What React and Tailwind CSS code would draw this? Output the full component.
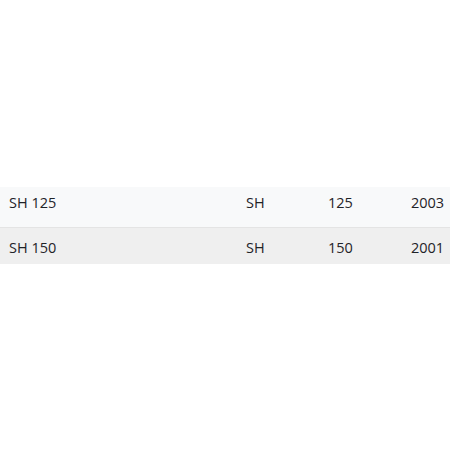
const rows = [
  { name: "SH 125", make: "SH", cc: "125", year: "2003", row: "bg-[#f8f9fa] border-b border-[#e4e4e4] h-[40px]", cell: "pt-[6px] pb-[14px]" },
  { name: "SH 150", make: "SH", cc: "150", year: "2001", row: "bg-[#efefef] h-[36px]", cell: "pt-[10px] pb-[6px]" },
];

export default function App() {
  return (
    <div className="min-h-[450px] bg-white pt-[187px] font-['Open_Sans',sans-serif] text-[14.5px] leading-[20px] text-[#1f2328]">
      <table className="w-full table-fixed border-collapse">
        <colgroup>
          <col className="w-[237px]" />
          <col className="w-[82px]" />
          <col className="w-[83px]" />
          <col />
        </colgroup>
        <tbody>
          {rows.map((r) => (
            <tr key={r.name} className={r.row}>
              <td className={`px-[9px] align-top ${r.cell}`}>{r.name}</td>
              <td className={`px-[9px] align-top ${r.cell}`}>{r.make}</td>
              <td className={`px-[9px] align-top ${r.cell}`}>{r.cc}</td>
              <td className={`px-[9px] align-top ${r.cell}`}>{r.year}</td>
            </tr>
          ))}
        </tbody>
      </table>
    </div>
  );
}
